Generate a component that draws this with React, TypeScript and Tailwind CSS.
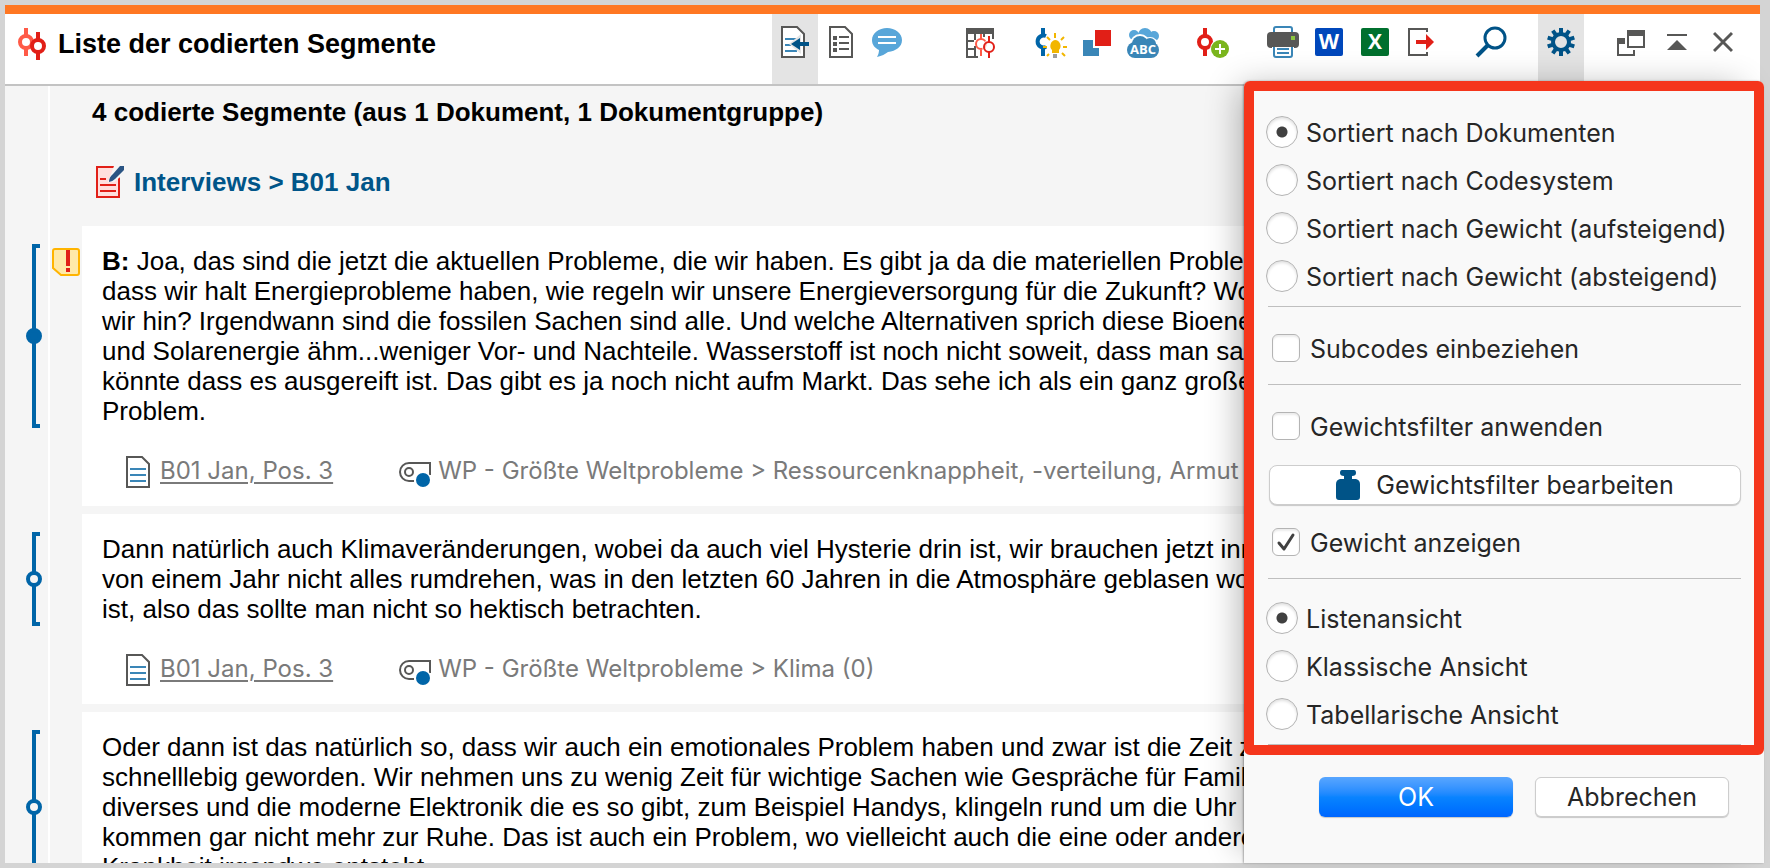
import type { ReactNode } from "react";

type Segment = {
  lines: string[];
  speaker?: string;
  code: string;
  weighted?: boolean;
  memo?: boolean;
};

const segments: Segment[] = [
  {
    speaker: "B:",
    weighted: true,
    memo: true,
    lines: [
      "Joa, das sind die jetzt die aktuellen Probleme, die wir haben. Es gibt ja da die materiellen Probleme",
      "dass wir halt Energieprobleme haben, wie regeln wir unsere Energieversorgung für die Zukunft? Wo",
      "wir hin? Irgendwann sind die fossilen Sachen sind alle. Und welche Alternativen sprich diese Bioenergie",
      "und Solarenergie ähm...weniger Vor- und Nachteile. Wasserstoff ist noch nicht soweit, dass man sagen",
      "könnte dass es ausgereift ist. Das gibt es ja noch nicht aufm Markt. Das sehe ich als ein ganz großes",
      "Problem.",
    ],
    code: "WP - Größte Weltprobleme > Ressourcenknappheit, -verteilung, Armut",
  },
  {
    lines: [
      "Dann natürlich auch Klimaveränderungen, wobei da auch viel Hysterie drin ist, wir brauchen jetzt innerhalb",
      "von einem Jahr nicht alles rumdrehen, was in den letzten 60 Jahren in die Atmosphäre geblasen worden",
      "ist, also das sollte man nicht so hektisch betrachten.",
    ],
    code: "WP - Größte Weltprobleme > Klima (0)",
  },
  {
    lines: [
      "Oder dann ist das natürlich so, dass wir auch ein emotionales Problem haben und zwar ist die Zeit zu",
      "schnelllebig geworden. Wir nehmen uns zu wenig Zeit für wichtige Sachen wie Gespräche für Familie",
      "diverses und die moderne Elektronik die es so gibt, zum Beispiel Handys, klingeln rund um die Uhr und",
      "kommen gar nicht mehr zur Ruhe. Das ist auch ein Problem, wo vielleicht auch die eine oder andere",
      "Krankheit irgendwo entsteht.",
    ],
    code: "WP - Größte Weltprobleme > Gesellschaft (0)",
  },
];

const sortOptions = [
  "Sortiert nach Dokumenten",
  "Sortiert nach Codesystem",
  "Sortiert nach Gewicht (aufsteigend)",
  "Sortiert nach Gewicht (absteigend)",
];

const viewOptions = ["Listenansicht", "Klassische Ansicht", "Tabellarische Ansicht"];

function Icon({ children, w = 32 }: { children: ReactNode; w?: number }) {
  return (
    <svg width={w} height="32" viewBox={`0 0 ${w} 32`} fill="none" aria-hidden="true" className="shrink-0">
      {children}
    </svg>
  );
}

function LogoIcon() {
  return (
    <Icon w={28}>
      <path d="M8 0v8M8 20v8" stroke="#ff5a47" strokeWidth="4" />
      <circle cx="8" cy="14" r="6" stroke="#ff5a47" strokeWidth="4" />
      <path d="M20 4v8M20 24v8" stroke="#e11f17" strokeWidth="4" />
      <circle cx="20" cy="18" r="6" stroke="#e11f17" strokeWidth="4" fill="#fff" />
    </Icon>
  );
}

function ImportIcon() {
  return (
    <Icon w={28}>
      <path d="M1 1h15l7 7v23H1z" fill="#fff" stroke="#575756" strokeWidth="2" />
      <path d="M4 13h12M4 19h6M4 25h12" stroke="#3a86b7" strokeWidth="2" />
      <path d="M20 8v20L8 18z" fill="#e4e4e4" />
      <path d="M10 18l9-6v4h9v4h-9v4z" fill="#005387" />
    </Icon>
  );
}

function ListDocIcon() {
  return (
    <Icon w={24}>
      <path d="M1 1h15l7 7v23H1z" fill="#fff" stroke="#575756" strokeWidth="2" />
      <path d="M4 10h4v4H4zM4 16h4v4H4zM4 22h4v4H4z" fill="#575756" />
      <path d="M10 11h10M10 17h10M10 23h10" stroke="#575756" strokeWidth="2" />
    </Icon>
  );
}

function CommentIcon() {
  return (
    <Icon w={30}>
      <path d="M15 2c8 0 15 5 15 12s-6 11-14 12c-3 2-6 4-11 5 1-2 2-4 2-7-4-2-7-5-7-10C0 7 7 2 15 2z" fill="#58a6d9" />
      <path d="M6 11h18M6 17h18" stroke="#fff" strokeWidth="2" />
    </Icon>
  );
}

function GridCodesIcon() {
  return (
    <Icon w={30}>
      <path d="M0 2h28v6H0z" fill="#575756" />
      <path d="M1 8v23h11M9 8v6M18 8v3M27 8v5M1 15h7M1 23h7M9 20v10" stroke="#575756" strokeWidth="2" />
      <path d="M15 8v6M15 24v6" stroke="#ff5a47" strokeWidth="2" />
      <circle cx="15" cy="18" r="5" stroke="#ff5a47" strokeWidth="2" />
      <circle cx="23" cy="21" r="7" fill="#fff" fillOpacity="0.7" />
      <path d="M23 10v6M23 26v6" stroke="#e11f17" strokeWidth="2" />
      <circle cx="23" cy="21" r="5" stroke="#e11f17" strokeWidth="2" />
    </Icon>
  );
}

function CodeIdeaIcon() {
  return (
    <Icon>
      <path d="M8 2v8M8 22v8" stroke="#0065a8" strokeWidth="4" />
      <path d="M11 10a6 6 0 1 0 0 11" stroke="#0065a8" strokeWidth="4" />
      <path d="M20 14a6 6 0 0 1 4 10v3h-7v-3a6 6 0 0 1 3-10z" fill="#f2b600" />
      <path d="M18 28h4v4h-4z" fill="#9c9c9c" />
      <path d="M20 7v5M12 11l3 3M29 11l-3 3M8 21h4M28 21h4M14 28l-2 2M27 27l3 3" stroke="#f2b600" strokeWidth="2" />
    </Icon>
  );
}

function SquaresIcon() {
  return (
    <Icon w={28}>
      <path d="M0 14h16v16H0z" fill="#3a86b7" />
      <path d="M10 2h18v20H10z" fill="#fff" />
      <path d="M12 4h16v16H12z" fill="#e11f17" />
    </Icon>
  );
}

function WordCloudIcon() {
  return (
    <Icon>
      <g fill="#58a6d9">
        <circle cx="18" cy="9" r="7" />
        <circle cx="27" cy="10" r="5" />
        <circle cx="7" cy="9" r="5" />
        <path d="M7 7h20v8H7z" />
      </g>
      <g fill="#fff">
        <circle cx="13" cy="18" r="10" />
        <circle cx="23" cy="19" r="8" />
      </g>
      <g fill="#3a86b7">
        <rect y="16" width="32" height="16" rx="8" />
        <circle cx="13" cy="18" r="8" />
        <circle cx="23" cy="18" r="6" />
      </g>
      <text x="16" y="28" textAnchor="middle" fontFamily="Open Sans, sans-serif" fontSize="13" fontWeight="700" fill="#fff">
        ABC
      </text>
    </Icon>
  );
}

function CodeAddIcon() {
  return (
    <Icon>
      <path d="M8 2v9M8 21v9" stroke="#e11f17" strokeWidth="4" />
      <circle cx="8" cy="16" r="6" stroke="#e11f17" strokeWidth="4" />
      <circle cx="23" cy="23" r="10" fill="#fff" />
      <circle cx="23" cy="23" r="9" fill="#7ab51d" />
      <path d="M23 18v10M18 23h10" stroke="#fff" strokeWidth="2" />
    </Icon>
  );
}

function PrinterIcon() {
  return (
    <Icon>
      <path d="M7 8V3q0-2 2-2h14q2 0 2 2v5" stroke="#3a86b7" strokeWidth="2" />
      <path d="M4 6h24q4 0 4 4v8q0 4-4 4H4q-4 0-4-4v-8q0-4 4-4z" fill="#575756" />
      <path d="M24 10h4v4h-4z" fill="#8cc63f" />
      <path d="M5 20h22v12H5z" fill="#fff" />
      <path d="M7 20v9q0 2 2 2h14q2 0 2-2v-9" fill="#fff" stroke="#3a86b7" strokeWidth="2" />
      <path d="M4 20h24" stroke="#575756" strokeWidth="2" />
      <path d="M10 23h12M10 27h12" stroke="#3a86b7" strokeWidth="2" />
    </Icon>
  );
}

function LetterIcon({ letter, color }: { letter: string; color: string }) {
  return (
    <Icon w={28}>
      <rect y="2" width="28" height="28" rx="2" fill={color} />
      <text x="14" y="23" textAnchor="middle" fontFamily="Open Sans, sans-serif" fontSize="21" fontWeight="700" fill="#fff">
        {letter}
      </text>
    </Icon>
  );
}

function ExportIcon() {
  return (
    <Icon w={26}>
      <path d="M19 6V3H1v26h18v-3" stroke="#575756" strokeWidth="2" />
      <path d="M8 14h10V8l8 8-8 8v-6H8z" fill="#e11f17" />
    </Icon>
  );
}

function SearchIcon() {
  return (
    <Icon>
      <circle cx="20" cy="12" r="10" stroke="#005387" strokeWidth="3" />
      <path d="M13 19L2 30" stroke="#005387" strokeWidth="4" />
    </Icon>
  );
}

function GearIcon() {
  return (
    <Icon w={28}>
      <g stroke="#005387" strokeWidth="4">
        <circle cx="14" cy="16" r="8" />
        {[0, 36, 72, 108, 144].map((deg) => (
          <path key={deg} d="M14 2v5M14 25v5" transform={`rotate(${deg} 14 16)`} />
        ))}
      </g>
    </Icon>
  );
}

function WindowsIcon() {
  return (
    <Icon w={28}>
      <path d="M10 4h18v6H10zM0 12h8v6H0z" fill="#575756" />
      <path d="M11 8v13h16V8M1 18v11h16v-5" stroke="#575756" strokeWidth="2" />
    </Icon>
  );
}

function CollapseIcon() {
  return (
    <Icon w={20}>
      <path d="M0 9h20" stroke="#575756" strokeWidth="2" />
      <path d="M10 14l10 10H0z" fill="#575756" />
    </Icon>
  );
}

function CloseIcon() {
  return (
    <Icon w={20}>
      <path d="M1 7l18 18M19 7L1 25" stroke="#575756" strokeWidth="3" />
    </Icon>
  );
}

function InterviewIcon() {
  return (
    <Icon w={28}>
      <path d="M1 1h22v30H1z" fill="#ffdfdd" stroke="#e11f17" strokeWidth="2" />
      <path d="M4 13h6M4 19h16M4 25h16" stroke="#e11f17" strokeWidth="2" />
      <path d="M18 0h10v8l-10 8h-6z" fill="#f5f5f5" />
      <path d="M13 16q0-5 4-8l7-8h4v4l-9 9q-3 3-6 3z" fill="#2a5483" />
    </Icon>
  );
}

function DocumentIcon() {
  return (
    <Icon w={24}>
      <path d="M1 1h15l7 7v23H1z" fill="#fff" stroke="#575756" strokeWidth="2" />
      <path d="M4 13h16M4 19h16M4 25h16" stroke="#3a86b7" strokeWidth="2" />
    </Icon>
  );
}

function CodeTagIcon() {
  return (
    <Icon>
      <path d="M15 25h-5A9 9 0 0 1 10 7h21v12" stroke="#575756" strokeWidth="2" />
      <circle cx="10" cy="16" r="4" stroke="#575756" strokeWidth="2" />
      <circle cx="24" cy="24" r="8" fill="#fff" />
      <circle cx="24" cy="24" r="7" fill="#0065a8" />
    </Icon>
  );
}

function MemoIcon() {
  return (
    <svg width="28" height="28" viewBox="0 0 28 28" aria-hidden="true">
      <path d="M3 1h22q2 0 2 2v22q0 2-2 2H9l-8-7V3q0-2 2-2z" fill="#ffe9a8" stroke="#ffb400" strokeWidth="2" />
      <path d="M14 2h4v16h-4zM14 20h4v4h-4z" fill="#e11f17" />
    </svg>
  );
}

function WeightIcon() {
  return (
    <svg width="24" height="30" viewBox="0 0 24 30" aria-hidden="true" className="shrink-0">
      <path d="M6 0h12q2 0 2 3t-4 3v3h4q4 1 4 5v13q0 3-3 3H3q-3 0-3-3V14q0-4 4-5h4V6Q4 6 4 3t2-3z" fill="#005387" />
    </svg>
  );
}

function ToolButton({ label, active, children }: { label: string; active?: boolean; children: ReactNode }) {
  return (
    <button
      type="button"
      aria-label={label}
      className={`flex w-[46px] justify-center pt-3 ${active ? "bg-[#e4e4e4]" : ""}`}
    >
      {children}
    </button>
  );
}

function Header() {
  return (
    <header className="flex h-[81px] shrink-0 justify-between border-t-[9px] border-b-2 border-t-[#ff7722] border-b-[#c3c3c3] bg-white pl-[13px]">
      <div className="flex items-start gap-3 pt-[14px]">
        <LogoIcon />
        <h1 className="text-[27px] leading-8 font-bold whitespace-nowrap">Liste der codierten Segmente</h1>
      </div>
      <div className="flex gap-6 pr-[14px]">
        <div className="mr-6 flex">
          <ToolButton label="Segmente aus aktivierten Dokumenten" active>
            <ImportIcon />
          </ToolButton>
          <ToolButton label="Liste">
            <ListDocIcon />
          </ToolButton>
          <ToolButton label="Kommentare">
            <CommentIcon />
          </ToolButton>
        </div>
        <ToolButton label="Codings-Übersicht">
          <GridCodesIcon />
        </ToolButton>
        <div className="flex">
          <ToolButton label="Smart Coding">
            <CodeIdeaIcon />
          </ToolButton>
          <ToolButton label="Farben">
            <SquaresIcon />
          </ToolButton>
          <ToolButton label="Wortwolke">
            <WordCloudIcon />
          </ToolButton>
        </div>
        <ToolButton label="Mit neuem Code codieren">
          <CodeAddIcon />
        </ToolButton>
        <div className="flex">
          <ToolButton label="Drucken">
            <PrinterIcon />
          </ToolButton>
          <ToolButton label="Als Word-Datei öffnen">
            <LetterIcon letter="W" color="#0047bb" />
          </ToolButton>
          <ToolButton label="Als Excel-Datei öffnen">
            <LetterIcon letter="X" color="#00702e" />
          </ToolButton>
          <ToolButton label="Exportieren">
            <ExportIcon />
          </ToolButton>
        </div>
        <ToolButton label="Suchen">
          <SearchIcon />
        </ToolButton>
        <ToolButton label="Einstellungen" active>
          <GearIcon />
        </ToolButton>
        <div className="flex">
          <ToolButton label="Abdocken">
            <WindowsIcon />
          </ToolButton>
          <ToolButton label="Einklappen">
            <CollapseIcon />
          </ToolButton>
          <ToolButton label="Schließen">
            <CloseIcon />
          </ToolButton>
        </div>
      </div>
    </header>
  );
}

function Bracket({ filled }: { filled?: boolean }) {
  return (
    <div className="relative flex w-4 flex-1 items-center">
      <div className="ml-[6px] w-2 self-stretch border-y-4 border-l-4 border-[#0065a8]" />
      <span
        className={`absolute left-0 h-4 w-4 rounded-full border-4 border-[#0065a8] ${filled ? "bg-[#0065a8]" : "bg-[#f5f5f5]"}`}
      />
    </div>
  );
}

function SegmentRow({ segment }: { segment: Segment }) {
  return (
    <li className="flex shrink-0">
      <div className="flex w-[45px] shrink-0 flex-col border-r-2 border-white pt-[18px] pb-[86px] pl-[21px]">
        <Bracket filled={segment.weighted} />
      </div>
      <div className="w-8 shrink-0 pt-[22px] pl-[2px]">{segment.memo && <MemoIcon />}</div>
      <article className="mb-2 min-w-0 flex-1 overflow-hidden bg-white pt-5 pb-[18px] pl-5 whitespace-nowrap">
        <p className="text-[26px] leading-[30px]">
          {segment.lines.map((line, i) => (
            <span key={i} className="block">
              {i === 0 && segment.speaker && <b>{segment.speaker} </b>}
              {line}
            </span>
          ))}
        </p>
        <footer className="mt-[30px] flex pl-6 font-['Inter',sans-serif] text-[24px] leading-[30px] text-[#7a7a7a]">
          <DocumentIcon />
          <a href="#pos-3" className="ml-[10px] underline decoration-2 underline-offset-3">
            B01 Jan, Pos. 3
          </a>
          <span className="ml-[66px] flex gap-[7px]">
            <CodeTagIcon />
            {segment.code}
          </span>
        </footer>
      </article>
    </li>
  );
}

function Radio({ name, label, checked }: { name: string; label: string; checked?: boolean }) {
  return (
    <label className="flex h-8 items-center gap-2">
      <input
        type="radio"
        name={name}
        defaultChecked={checked}
        className="h-8 w-8 shrink-0 appearance-none rounded-full border border-[#b4b4b4] bg-white shadow-[inset_0_2px_3px_rgba(0,0,0,0.12)] checked:bg-[radial-gradient(circle,#404040_5px,#fff_6px)]"
      />
      <span className="pt-0.5">{label}</span>
    </label>
  );
}

function Checkbox({ label, checked }: { label: string; checked?: boolean }) {
  return (
    <label className="ml-[6px] flex h-8 items-center gap-[10px]">
      <span className="relative h-7 w-7 shrink-0">
        <input
          type="checkbox"
          defaultChecked={checked}
          className="peer block h-7 w-7 appearance-none rounded-md border border-[#b4b4b4] bg-white shadow-[inset_0_2px_2px_rgba(0,0,0,0.08)]"
        />
        <svg viewBox="0 0 28 28" fill="none" aria-hidden="true" className="pointer-events-none absolute inset-0 hidden peer-checked:block">
          <path d="M7 15l5 6L21 7" stroke="#404040" strokeWidth="3" strokeLinecap="round" strokeLinejoin="round" />
        </svg>
      </span>
      <span className="pt-0.5">{label}</span>
    </label>
  );
}

function Divider() {
  return <hr className="mr-[3px] ml-[2px] border-[#bfbfbf]" />;
}

function OptionsPopup() {
  return (
    <form className="absolute top-[81px] right-[6px] bottom-[5px] flex w-[520px] flex-col rounded-t-md bg-[#f9f9f9] font-['Inter',sans-serif] text-[25px] leading-8 whitespace-nowrap text-[#262626] shadow-[-14px_-4px_32px_-10px_rgba(0,0,0,0.3),-1px_0_2px_rgba(0,0,0,0.3)]">
      <div className="rounded-md border-[10px] border-[#f5361c] pr-[10px] pl-3">
        <div role="radiogroup" aria-label="Sortierung" className="flex flex-col gap-4 pt-[25px] pb-[14px]">
          {sortOptions.map((option, i) => (
            <Radio key={option} name="sort" label={option} checked={i === 0} />
          ))}
        </div>
        <Divider />
        <div className="pt-[25px] pb-5">
          <Checkbox label="Subcodes einbeziehen" />
        </div>
        <Divider />
        <div className="flex flex-col pt-[25px] pb-5">
          <Checkbox label="Gewichtsfilter anwenden" />
          <button
            type="button"
            className="mt-[23px] mr-[3px] mb-[21px] ml-[3px] flex h-10 items-center justify-center gap-4 rounded-lg border border-[#cdcdcd] bg-white shadow-[0_1px_1px_rgba(0,0,0,0.2)]"
          >
            <WeightIcon />
            Gewichtsfilter bearbeiten
          </button>
          <Checkbox label="Gewicht anzeigen" checked />
        </div>
        <Divider />
        <div role="radiogroup" aria-label="Ansicht" className="flex flex-col gap-4 pt-[23px] pb-[14px]">
          {viewOptions.map((option, i) => (
            <Radio key={option} name="view" label={option} checked={i === 0} />
          ))}
        </div>
        <Divider />
      </div>
      <div className="mt-[22px] flex justify-end gap-[22px] pr-[35px]">
        <button
          type="submit"
          className="h-10 w-[194px] rounded-md bg-linear-to-b from-[#58a6ff] via-[#0a84ff] to-[#0066ff] text-white shadow-[0_1px_1px_rgba(0,0,0,0.2)]"
        >
          OK
        </button>
        <button
          type="button"
          className="h-10 w-[194px] rounded-md border border-[#cdcdcd] bg-white shadow-[0_1px_1px_rgba(0,0,0,0.2)]"
        >
          Abbrechen
        </button>
      </div>
    </form>
  );
}

export default function App() {
  return (
    <div className="relative flex h-screen flex-col overflow-hidden bg-[#d4d4d4] p-[5px] pr-[10px] font-['Liberation_Sans',Arial,sans-serif] text-black">
      <Header />
      <main className="flex min-h-0 flex-1 flex-col overflow-hidden bg-[#f5f5f5]">
        <div className="flex shrink-0">
          <div className="w-[45px] shrink-0 border-r-2 border-white" />
          <div className="pt-[10px] pb-7 pl-[42px]">
            <h2 className="text-[26px] leading-8 font-bold">4 codierte Segmente (aus 1 Dokument, 1 Dokumentgruppe)</h2>
            <a href="#b01-jan" className="mt-[38px] ml-1 flex items-center gap-[10px] text-[26px] leading-8 font-bold text-[#005589]">
              <InterviewIcon />
              Interviews &gt; B01 Jan
            </a>
          </div>
        </div>
        <ul className="flex flex-col">
          {segments.map((segment) => (
            <SegmentRow key={segment.code} segment={segment} />
          ))}
        </ul>
      </main>
      <OptionsPopup />
    </div>
  );
}
